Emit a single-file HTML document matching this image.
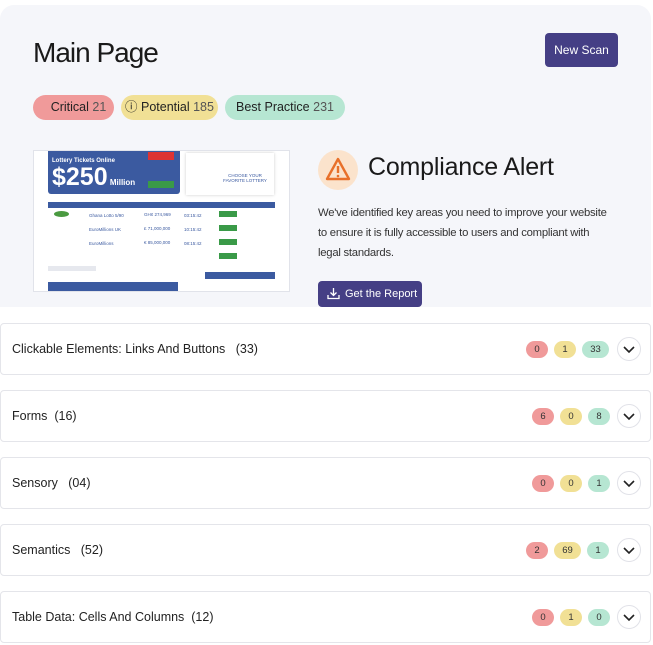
<!DOCTYPE html>
<html><head><meta charset="utf-8"><style>
*{box-sizing:border-box;margin:0;padding:0}
body{width:653px;height:645px;background:#fff;font-family:"Liberation Sans",sans-serif;color:#1d1d1f;position:relative;overflow:hidden}
.top{position:absolute;left:0;top:5px;width:651px;height:302px;background:#f5f6fa;border-radius:14px 14px 0 0}
h1{position:absolute;left:33px;top:37px;font-size:28px;font-weight:400;letter-spacing:-1px;color:#1a1a1a}
.ns{position:absolute;left:545px;top:33px;width:73px;height:34px;background:#453f85;border-radius:4px;color:#fff;font-size:12px;line-height:34px;text-align:center}
.pill{position:absolute;top:95px;height:25px;border-radius:13px;font-size:12.5px;line-height:25px;text-align:center;color:#222}
.pill span{color:#555}
.shot{position:absolute;left:33px;top:150px;width:257px;height:142px;background:#fff;border:1px solid #e1e3ea;overflow:hidden}
.ca{position:absolute;left:318px;top:150px;width:40px;height:40px;border-radius:50%;background:#fbe3cc}
.cat{position:absolute;left:368px;top:153px;font-size:25px;color:#1a1a1a;letter-spacing:-0.2px}
.desc{position:absolute;left:318px;top:203px;width:292px;font-size:11.3px;line-height:20px;color:#333;letter-spacing:-0.25px}
.gr{position:absolute;left:318px;top:281px;width:104px;height:26px;background:#453f85;border-radius:4px;color:#fff;font-size:11px;line-height:26px;padding-left:27px}
.row{position:absolute;left:0;width:651px;height:52px;border:1px solid #e4e5ea;border-radius:4px;background:#fff}
.row .t{position:absolute;left:11px;top:18px;font-size:12.5px;color:#222}
.b{position:absolute;top:17px;height:17px;border-radius:9px;font-size:9.5px;line-height:17px;text-align:center;color:#333}
.r{background:#f09a9a}.y{background:#f1e095}.g{background:#b6e6d2}
.ch{position:absolute;left:616px;top:13px;width:24px;height:24px;border:1px solid #e1e2e8;border-radius:50%;background:#fff}
.sm{position:absolute;font-size:4.5px;color:#3b5aa0}
</style></head><body>
<div class="top"></div>
<h1>Main Page</h1>
<div class="ns">New Scan</div>
<div class="pill r" style="left:33px;width:81px;padding-left:10px">Critical <span>21</span></div>
<div class="pill y" style="left:121px;width:97px">ⓘ Potential <span>185</span></div>
<div class="pill g" style="left:225px;width:120px">Best Practice <span>231</span></div>
<div class="shot">
 <div style="position:absolute;left:14px;top:-2px;width:132px;height:45px;background:#3b5aa0;border-radius:0 0 3px 3px;color:#fff">
  <div style="font-size:6px;font-weight:bold;position:absolute;left:4px;top:9px">Lottery Tickets Online</div>
  <div style="position:absolute;left:4px;top:14px;font-size:25px;font-weight:bold">$250<span style="font-size:8px"> Million</span></div>
  <div style="position:absolute;left:100px;top:3px;width:26px;height:8px;background:#d33"></div>
  <div style="position:absolute;left:100px;top:32px;width:26px;height:7px;background:#3a9a48"></div>
 </div>
 <div style="position:absolute;left:152px;top:2px;width:88px;height:42px;background:#fff;box-shadow:0 0 3px #ccc;font-size:4.5px;color:#3b5aa0;text-align:center;padding-top:20px;padding-left:30px">CHOOSE YOUR<br>FAVORITE LOTTERY</div>
 <div style="position:absolute;left:14px;top:51px;width:227px;height:6px;background:#3b5aa0"></div>
 <div class="sm" style="left:55px;top:62px">Ghana Lotto 5/90</div><div class="sm" style="left:110px;top:61px">GH¢ 274,969</div><div class="sm" style="left:150px;top:62px">03:15:42</div>
 <div class="sm" style="left:55px;top:76px">EuroMillions UK</div><div class="sm" style="left:110px;top:75px">£ 71,000,000</div><div class="sm" style="left:150px;top:76px">10:15:42</div>
 <div class="sm" style="left:55px;top:90px">EuroMillions</div><div class="sm" style="left:110px;top:89px">€ 85,000,000</div><div class="sm" style="left:150px;top:90px">08:15:42</div>
 <div style="position:absolute;left:185px;top:60px;width:18px;height:6px;background:#3a9a48"></div>
 <div style="position:absolute;left:185px;top:74px;width:18px;height:6px;background:#3a9a48"></div>
 <div style="position:absolute;left:185px;top:88px;width:18px;height:6px;background:#3a9a48"></div>
 <div style="position:absolute;left:185px;top:102px;width:18px;height:6px;background:#3a9a48"></div>
 <div style="position:absolute;left:20px;top:60px;width:15px;height:6px;background:#4a9a40;border-radius:50%"></div>
 <div style="position:absolute;left:14px;top:115px;width:48px;height:5px;background:#e6e8ee"></div>
 <div style="position:absolute;left:14px;top:131px;width:130px;height:15px;background:#3b5aa0"></div>
 <div style="position:absolute;left:171px;top:121px;width:70px;height:7px;background:#3b5aa0"></div>
</div>
<div class="ca"><svg width="40" height="40" viewBox="0 0 40 40"><path d="M20 9 L31 29 H9 Z" fill="none" stroke="#e8702a" stroke-width="2.4" stroke-linejoin="round"/><path d="M20 16v7" stroke="#e8702a" stroke-width="2.4"/><circle cx="20" cy="26" r="1.3" fill="#e8702a"/></svg></div>
<div class="cat">Compliance Alert</div>
<div class="desc">We've identified key areas you need to improve your website to ensure it is fully accessible to users and compliant with legal standards.</div>
<div class="gr"><svg style="position:absolute;left:9px;top:6px" width="13" height="13" viewBox="0 0 13 13"><path d="M6.5 1v7M3.5 5.5l3 3 3-3M1 8v3.5h11V8" fill="none" stroke="#fff" stroke-width="1.3"/></svg>Get the Report</div>

<div class="row" style="top:323px"><div class="t">Clickable Elements: Links And Buttons&nbsp;&nbsp;&nbsp;(33)</div>
<div class="b r" style="left:525px;width:22px">0</div><div class="b y" style="left:553px;width:22px">1</div><div class="b g" style="left:581px;width:27px">33</div>
<div class="ch"><svg width="22" height="22"><path d="M6 9l5 5 5-5" fill="none" stroke="#222" stroke-width="1.6"/></svg></div></div>
<div class="row" style="top:390px"><div class="t">Forms&nbsp;&nbsp;(16)</div>
<div class="b r" style="left:531px;width:22px">6</div><div class="b y" style="left:559px;width:22px">0</div><div class="b g" style="left:587px;width:22px">8</div>
<div class="ch"><svg width="22" height="22"><path d="M6 9l5 5 5-5" fill="none" stroke="#222" stroke-width="1.6"/></svg></div></div>
<div class="row" style="top:457px"><div class="t">Sensory&nbsp;&nbsp;&nbsp;(04)</div>
<div class="b r" style="left:531px;width:22px">0</div><div class="b y" style="left:559px;width:22px">0</div><div class="b g" style="left:587px;width:22px">1</div>
<div class="ch"><svg width="22" height="22"><path d="M6 9l5 5 5-5" fill="none" stroke="#222" stroke-width="1.6"/></svg></div></div>
<div class="row" style="top:524px"><div class="t">Semantics&nbsp;&nbsp;&nbsp;(52)</div>
<div class="b r" style="left:525px;width:22px">2</div><div class="b y" style="left:553px;width:27px">69</div><div class="b g" style="left:586px;width:22px">1</div>
<div class="ch"><svg width="22" height="22"><path d="M6 9l5 5 5-5" fill="none" stroke="#222" stroke-width="1.6"/></svg></div></div>
<div class="row" style="top:591px"><div class="t">Table Data: Cells And Columns&nbsp;&nbsp;(12)</div>
<div class="b r" style="left:531px;width:22px">0</div><div class="b y" style="left:559px;width:22px">1</div><div class="b g" style="left:587px;width:22px">0</div>
<div class="ch"><svg width="22" height="22"><path d="M6 9l5 5 5-5" fill="none" stroke="#222" stroke-width="1.6"/></svg></div></div>
</body></html>
